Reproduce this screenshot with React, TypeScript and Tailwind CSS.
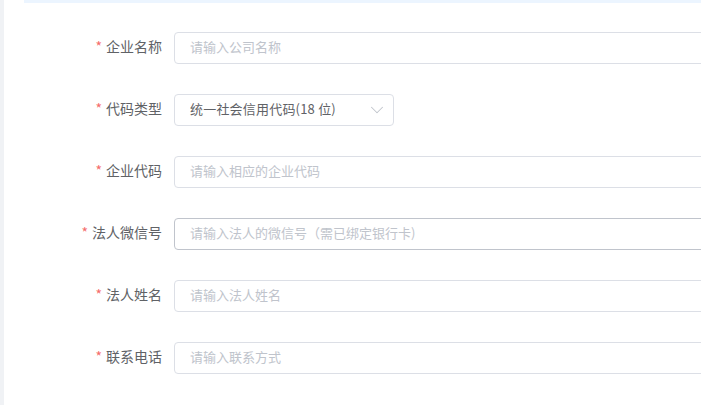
import { ChevronDown } from "lucide-react"

const font = { fontFamily: '"Microsoft YaHei", "Noto Sans CJK SC", sans-serif' }

function Label({ text }: { text: string }) {
  return (
    <label className="w-[150px] shrink-0 self-start pr-[12px] text-right text-[14px] leading-[29px] text-[#606266]">
      <span className="mr-[4px] text-[#f56c6c]">*</span>
      {text}
    </label>
  )
}

function TextRow({ label, placeholder, hover }: { label: string; placeholder: string; hover?: boolean }) {
  return (
    <div className="flex h-[32px] items-center mb-[30px]">
      <Label text={label} />
      <input
        readOnly
        placeholder={placeholder}
        className={
          "h-[32px] w-[600px] shrink-0 rounded-[4px] border bg-white px-[15px] pb-[3px] text-[13px] text-[#606266] outline-none placeholder:text-[#c0c4cc] " +
          (hover ? "border-[#c0c4cc]" : "border-[#dcdfe6]")
        }
      />
    </div>
  )
}

export default function App() {
  return (
    <div className="flex h-[405px] w-[701px] overflow-hidden bg-white" style={font}>
      <div className="w-[4px] shrink-0 bg-[#f0f2f5]" />
      <div className="flex-1 pl-[20px]">
        <div className="h-[3px] bg-[#ecf5ff]" />
        <div className="pt-[29px]">
          <TextRow label="企业名称" placeholder="请输入公司名称" />

          {/* select */}
          <div className="flex h-[32px] items-center mb-[30px]">
            <Label text="代码类型" />
            <div className="flex h-[32px] w-[220px] shrink-0 items-center justify-between rounded-[4px] border border-[#dcdfe6] bg-white pl-[15px] pr-[5px] text-[13px] text-[#606266]">
              <span className="pb-[3px] tracking-[0.2px]">统一社会信用代码(18 位)</span>
              <ChevronDown className="h-[22px] w-[22px] text-[#c0c4cc]" strokeWidth={1.1} />
            </div>
          </div>

          <TextRow label="企业代码" placeholder="请输入相应的企业代码" />
          <TextRow label="法人微信号" placeholder="请输入法人的微信号（需已绑定银行卡)" hover />
          <TextRow label="法人姓名" placeholder="请输入法人姓名" />
          <TextRow label="联系电话" placeholder="请输入联系方式" />
        </div>
      </div>
    </div>
  )
}
